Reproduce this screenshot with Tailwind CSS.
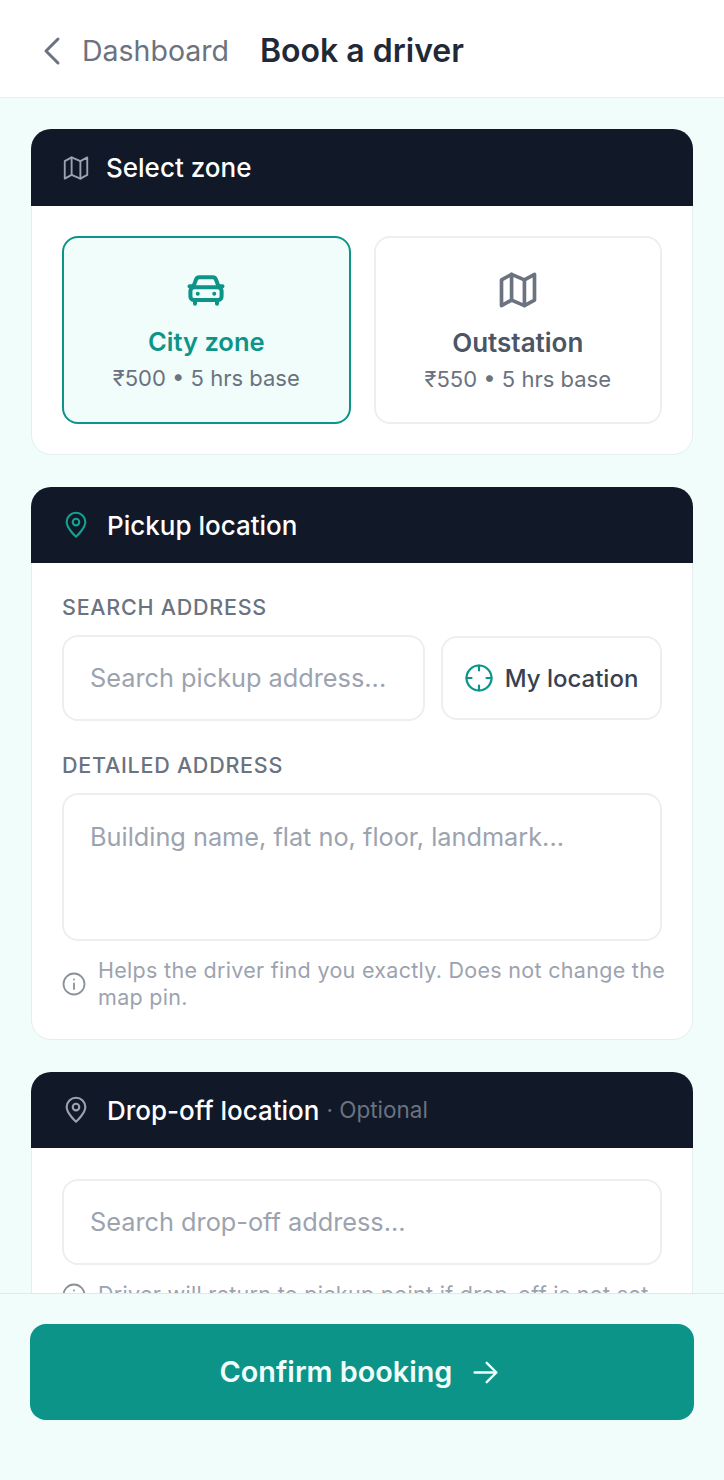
<!DOCTYPE html>
<html lang="en">
<head>
    <meta charset="UTF-8">
    <meta name="viewport" content="width=device-width, initial-scale=1.0">
    <title>Book a driver</title>
    <script src="https://cdn.jsdelivr.net/npm/@tailwindcss/browser@4"></script>
</head>
<body class="font-['Inter',sans-serif] bg-[#f0fdfa]">
    <div class="flex flex-col h-[1480px] overflow-hidden">
        <!-- Top bar -->
        <header class="h-[98px] shrink-0 flex items-center bg-white border-b border-[#e9eeee] pl-[42px] pt-[5px]">
            <svg class="w-5 h-[30px] text-[#6b7280]" viewBox="0 0 20 30" fill="none" stroke="currentColor" stroke-width="3" stroke-linecap="round" stroke-linejoin="round"><path d="M16 3 4 15l12 12"/></svg>
            <span class="ml-[20px] text-[28.5px] text-[#6b7280]">Dashboard</span>
            <span class="ml-[31px] text-[32px] font-semibold text-[#1f2937]">Book a driver</span>
        </header>

        <main class="flex-1 overflow-hidden px-[31px] pt-[31px] flex flex-col gap-[32px]">
            <!-- Zone -->
            <section class="shrink-0 bg-white rounded-[20px] border border-[#e5eeec]">
                <div class="h-[77px] -mx-px -mt-px bg-[#111827] rounded-t-[20px] flex items-center pl-[30px]">
                    <svg class="w-[30px] h-[30px] text-[#9ca3af]" viewBox="0 0 24 24" fill="none" stroke="currentColor" stroke-width="1.500" stroke-linecap="round" stroke-linejoin="round"><path d="M3 6.500 8.500 3.500l7 3 5.500-3v14l-5.500 3-7-3-5.500 3z"/><path d="M8.500 3.500v14"/><path d="M15.500 6.500v14"/></svg>
                    <span class="ml-[15px] text-[26px] font-medium text-white">Select zone</span>
                </div>
                <div class="p-[30px] grid grid-cols-2 gap-[23px]">
                    <div class="h-[188px] rounded-[16px] border-2 border-[#0d9488] bg-[#f0fdfa] flex flex-col items-center pt-[30px]">
                        <svg class="w-[44px] h-[44px] text-[#0d9488]" viewBox="0 0 24 24" fill="none" stroke="currentColor" stroke-width="2.200" stroke-linecap="round" stroke-linejoin="round"><path d="M5 10.500 6.500 6.500a2 2 0 0 1 1.900-1.500h7.200a2 2 0 0 1 1.900 1.500l1.500 4"/><path d="M3 10h1.500M19.500 10H21"/><rect x="3.500" y="10.500" width="17" height="7" rx="2"/><path d="M6 18v1.500M18 18v1.500"/><path d="M7.500 14h.01M16.500 14h.01"/></svg>
                        <span class="mt-[11px] text-[25.500px] font-semibold text-[#0d9488]">City zone</span>
                        <span class="mt-px text-[22px] text-[#6b7280]">₹500 • 5 hrs base</span>
                    </div>
                    <div class="h-[188px] rounded-[16px] border-2 border-[#eceff1] bg-white flex flex-col items-center pt-[30px]">
                        <svg class="w-[44px] h-[44px] text-[#6b7280]" viewBox="0 0 24 24" fill="none" stroke="currentColor" stroke-width="2" stroke-linecap="round" stroke-linejoin="round"><path d="M3 6.500 8.500 3.500l7 3 5.500-3v14l-5.500 3-7-3-5.500 3z"/><path d="M8.500 3.500v14"/><path d="M15.500 6.500v14"/></svg>
                        <span class="mt-[11px] text-[26px] font-semibold text-[#4b5563]">Outstation</span>
                        <span class="mt-px text-[22px] text-[#6b7280]">₹550 • 5 hrs base</span>
                    </div>
                </div>
            </section>

            <!-- Pickup -->
            <section class="shrink-0 bg-white rounded-[20px] border border-[#e5eeec]">
                <div class="h-[76px] -mx-px -mt-px bg-[#111827] rounded-t-[20px] flex items-center pl-[31px]">
                    <svg class="w-[28px] h-[28px] text-[#14a392]" viewBox="0 0 24 24" fill="none" stroke="currentColor" stroke-width="1.800" stroke-linecap="round" stroke-linejoin="round"><path d="M12 22s-8-7-8-12.500a8 8 0 0 1 16 0C20 15 12 22 12 22z"/><circle cx="12" cy="9.500" r="2.800"/></svg>
                    <span class="ml-[17px] text-[26px] font-medium text-white">Pickup location</span>
                </div>
                <div class="px-[30px] pt-[31px] pb-[28px]">
                    <div class="text-[21.500px] font-medium leading-[26px] tracking-[0.75px] text-[#6b7280]">SEARCH ADDRESS</div>
                    <div class="mt-[15px] flex items-center gap-[16px]">
                        <div class="flex-1 h-[86px] rounded-[16px] border-2 border-[#eceff1] flex items-center pl-[26px] text-[25.300px] text-[#9ca3af]">Search pickup address...</div>
                        <div class="w-[221px] h-[84px] rounded-[16px] border-2 border-[#eceff1] flex items-center justify-center gap-[12px]">
                            <svg class="w-[28px] h-[28px] text-[#0d9488]" viewBox="0 0 28 28" fill="none" stroke="currentColor" stroke-width="2.200" stroke-linecap="round"><circle cx="14" cy="14" r="12.500"/><path d="M14 1.500v5M14 21.500v5M1.500 14h5M21.500 14h5"/></svg>
                            <span class="pt-px text-[24px] text-[#374151] font-[450]">My location</span>
                        </div>
                    </div>
                    <div class="mt-[31px] text-[21.500px] font-medium leading-[26px] tracking-[0.75px] text-[#6b7280]">DETAILED ADDRESS</div>
                    <div class="mt-[15px] h-[148px] rounded-[16px] border-2 border-[#eceff1] pl-[26px] pt-[26px] text-[25.300px] leading-[32px] text-[#9ca3af]">Building name, flat no, floor, landmark...</div>
                    <div class="mt-[16px] flex items-center gap-[12px]">
                        <svg class="w-[24px] h-[24px] shrink-0 text-[#8b9199]" viewBox="0 0 24 24" fill="none" stroke="currentColor" stroke-width="1.800" stroke-linecap="round"><circle cx="12" cy="12" r="10.500"/><path d="M12 11.500v5.500M12 7.500h.01"/></svg>
                        <p class="-mr-[6px] text-[21.500px] leading-[27px] tracking-[0.3px] text-[#9ca3af]">Helps the driver find you exactly. Does not change the map pin.</p>
                    </div>
                </div>
            </section>

            <!-- Drop-off -->
            <section class="shrink-0 bg-white rounded-[20px] border border-[#e5eeec]">
                <div class="h-[76px] -mx-px -mt-px bg-[#111827] rounded-t-[20px] flex items-center pl-[31px]">
                    <svg class="w-[28px] h-[28px] text-[#9ca3af]" viewBox="0 0 24 24" fill="none" stroke="currentColor" stroke-width="1.800" stroke-linecap="round" stroke-linejoin="round"><path d="M12 22s-8-7-8-12.500a8 8 0 0 1 16 0C20 15 12 22 12 22z"/><circle cx="12" cy="9.500" r="2.800"/></svg>
                    <span class="ml-[17px] text-[26px] font-medium text-white">Drop-off location</span>
                    <span class="ml-[7px] text-[22.500px] text-[#6b7280]">· Optional</span>
                </div>
                <div class="px-[30px] pt-[31px] pb-[29px]">
                    <div class="h-[86px] rounded-[16px] border-2 border-[#eceff1] flex items-center pl-[26px] text-[25.300px] text-[#9ca3af]">Search drop-off address...</div>
                    <div class="mt-[16px] flex items-center gap-[12px]">
                        <svg class="w-[24px] h-[24px] shrink-0 text-[#8b9199]" viewBox="0 0 24 24" fill="none" stroke="currentColor" stroke-width="1.800" stroke-linecap="round"><circle cx="12" cy="12" r="10.500"/><path d="M12 11.500v5.500M12 7.500h.01"/></svg>
                        <p class="text-[21.500px] leading-[27px] tracking-[0.3px] text-[#9ca3af]">Driver will return to pickup point if drop-off is not set</p>
                    </div>
                </div>
            </section>
        </main>

        <!-- Footer -->
        <footer class="h-[187px] shrink-0 bg-[#f0fdfa] border-t border-[#e2e8e8] pt-[30px] px-[30px]">
            <button class="w-full h-[96px] pr-[4px] rounded-[16px] bg-[#0d9488] flex items-center justify-center gap-[19px] text-[28.800px] font-semibold text-[#f0fdfa]">
                Confirm booking
                <svg class="w-[29px] h-[29px]" viewBox="0 0 24 24" fill="none" stroke="currentColor" stroke-width="2" stroke-linecap="round" stroke-linejoin="round"><path d="M3 12h18M13 4l8 8-8 8"/></svg>
            </button>
        </footer>
    </div>
</body>
</html>
